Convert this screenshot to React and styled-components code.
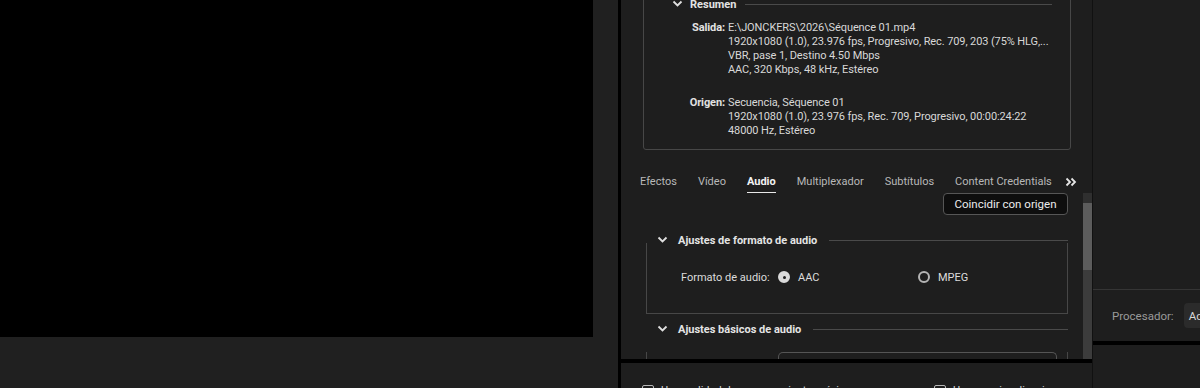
import React from 'react';
import styled, { createGlobalStyle } from 'styled-components';

const Global = createGlobalStyle`
    html, body {
        margin: 0;
        padding: 0;
        background: #1e1e1e;
        overflow: hidden;
    }
    body {
        font-family: Roboto, "Noto Sans", sans-serif;
        font-size: 11px;
        color: #d6d6d6;
    }
`;

const Screen = styled.div`
    display: flex;
    width: 1200px;
    height: 388px;
    overflow: hidden;
    background: #1e1e1e;
`;

const PreviewColumn = styled.div`
    width: 618px;
    flex-shrink: 0;
    background: #202020;
`;

const Video = styled.div`
    width: 593px;
    height: 337px;
    background: #000;
`;

const Divider = styled.div`
    width: ${props => props.size || 3}px;
    flex-shrink: 0;
    background: ${props => props.color || '#000'};
`;

const SettingsColumn = styled.div`
    width: 471px;
    flex-shrink: 0;
    display: flex;
    flex-direction: column;
    background: #1e1e1e;
`;

const Fixed = styled.div`
    height: 193px;
    flex-shrink: 0;
    overflow: hidden;
`;

const SummaryBox = styled.div`
    margin: -12px 21px 0 22px;
    border: 1px solid #474747;
    border-radius: 3px;
    padding: 8px 0 11px 0;
`;

const Heading = styled.div`
    display: flex;
    align-items: center;
    height: 14px;
    gap: ${props => props.gap || 7}px;
    padding-left: ${props => props.indent || 0}px;
    padding-right: ${props => props.endGap || 0}px;
    font-weight: 700;
    font-size: 11px;
    color: #e4e4e4;
    white-space: nowrap;
`;

const HeadLine = styled.div`
    flex: 1;
    height: 1px;
    background: #4a4a4a;
    margin-left: 2px;
`;

const Chevron = () => (
    <svg width="11" height="8" viewBox="0 0 11 8">
        <path d="M1.5 1.5 L5.5 5.5 L9.5 1.5" fill="none" stroke="#e0e0e0" strokeWidth="1.8" />
    </svg>
);

const InfoGrid = styled.div`
    display: grid;
    grid-template-columns: 81px 1fr;
    column-gap: 3px;
    margin-top: ${props => props.top}px;
    line-height: 14px;
    letter-spacing: -0.1px;
`;

const InfoLabel = styled.div`
    text-align: right;
    font-weight: 700;
    color: #e2e2e2;
`;

const InfoValue = styled.div`
    color: #d8d8d8;
    white-space: nowrap;
`;

const Tabs = styled.div`
    display: flex;
    align-items: flex-end;
    margin: 23px 12px 0 19px;
    height: 20px;
    border-bottom: 1px solid #3e3e3e;
    gap: 21px;
`;

const Tab = styled.div`
    position: relative;
    height: 20px;
    line-height: 17px;
    font-size: 11px;
    white-space: nowrap;
    color: ${props => props.active ? '#f2f2f2' : '#b8b8b8'};
    font-weight: ${props => props.active ? 700 : 400};
    &::after {
        content: '';
        display: ${props => props.active ? 'block' : 'none'};
        position: absolute;
        left: 0;
        right: 0;
        bottom: -1px;
        height: 2px;
        background: #e8e8e8;
    }
`;

const More = styled.div`
    height: 20px;
    margin-left: -8px;
    display: flex;
    align-items: flex-start;
    padding-top: 4px;
    box-sizing: border-box;
`;

const ScrollArea = styled.div`
    height: 166px;
    flex-shrink: 0;
    display: flex;
    overflow: hidden;
`;

const ScrollContent = styled.div`
    flex: 1;
    overflow: hidden;
`;

const Scrollbar = styled.div`
    width: 9px;
    display: flex;
    flex-direction: column;
    background: #3a3a3a;
`;

const ScrollPart = styled.div`
    height: ${props => props.h}px;
    background: ${props => props.color};
`;

const ButtonRow = styled.div`
    display: flex;
    justify-content: flex-end;
    padding-right: 15px;
`;

const Button = styled.div`
    width: 123px;
    height: 20px;
    box-sizing: content-box;
    border: 1px solid #565656;
    border-radius: 4px;
    background: #0e0e0e;
    color: #ececec;
    font-size: 11.5px;
    display: flex;
    align-items: center;
    justify-content: center;
`;

const Section = styled.div`
    margin: ${props => props.top}px 15px 0 25px;
`;

const SectionBody = styled.div`
    margin-top: -4px;
    border: 1px solid #474747;
    border-top: none;
    border-bottom: ${props => props.open ? 'none' : '1px solid #474747'};
    height: ${props => props.h}px;
    box-sizing: border-box;
`;

const FieldRow = styled.div`
    display: flex;
    align-items: center;
    height: 14px;
    padding: 27px 0 0 34px;
    color: #dcdcdc;
`;

const FieldLabel = styled.div`
    width: 97px;
`;

const RadioOption = styled.div`
    display: flex;
    align-items: center;
    gap: 8px;
    width: ${props => props.w || 'auto'};
`;

const Radio = styled.div`
    width: 12px;
    height: 12px;
    border-radius: 50%;
    box-sizing: border-box;
    border: 2px solid ${props => props.checked ? '#dadada' : '#b4b4b4'};
    background: ${props => props.checked ? '#dadada' : 'transparent'};
    display: flex;
    align-items: center;
    justify-content: center;
    &::after {
        content: '';
        width: 3px;
        height: 3px;
        border-radius: 50%;
        background: #1e1e1e;
        display: ${props => props.checked ? 'block' : 'none'};
    }
`;

const Field = styled.div`
    margin: 20px 10px 0 131px;
    height: 14px;
    border: 1px solid #555;
    border-bottom: none;
    border-radius: 5px 5px 0 0;
`;

const BottomPanel = styled.div`
    flex: 1;
    display: flex;
    padding: 21px 0 0 21px;
    border-top: 4px solid #000;
    overflow: hidden;
`;

const Check = styled.div`
    display: flex;
    align-items: flex-start;
    gap: 7px;
    width: ${props => props.w}px;
    color: #d8d8d8;
    white-space: nowrap;
`;

const CheckBox = styled.div`
    width: 10px;
    height: 10px;
    border: 1px solid #b8b8b8;
    border-radius: 2px;
    flex-shrink: 0;
    margin-top: 1px;
`;

const SideColumn = styled.div`
    flex: 1;
    display: flex;
    flex-direction: column;
    background: #1e1e1e;
`;

const SideTop = styled.div`
    height: 289px;
    border-bottom: 1px solid #353535;
`;

const ProcRow = styled.div`
    height: 51px;
    display: flex;
    align-items: center;
    gap: 10px;
    padding-left: 19px;
    border-bottom: 4px solid #000;
    color: #9a9a9a;
    font-size: 11.5px;
`;

const Select = styled.div`
    width: 60px;
    height: 25px;
    border-radius: 4px 0 0 4px;
    background: #2b2b2b;
    color: #d8d8d8;
    display: flex;
    align-items: center;
    padding-left: 5px;
    white-space: nowrap;
    overflow: hidden;
`;

const salida = [
    'E:\\JONCKERS\\2026\\Séquence 01.mp4',
    '1920x1080 (1.0), 23.976 fps, Progresivo, Rec. 709, 203 (75% HLG,...',
    'VBR, pase 1, Destino 4.50 Mbps',
    'AAC, 320 Kbps, 48 kHz, Estéreo',
];

const origen = [
    'Secuencia, Séquence 01',
    '1920x1080 (1.0), 23.976 fps, Rec. 709, Progresivo, 00:00:24:22',
    '48000 Hz, Estéreo',
];

const tabs = ['Efectos', 'Vídeo', 'Audio', 'Multiplexador', 'Subtítulos', 'Content Credentials'];

const InfoBlock = ({ label, lines, top }) => (
    <InfoGrid top={top}>
        {lines.map((line, i) => (
            <React.Fragment key={i}>
                <InfoLabel>{i === 0 ? label : ''}</InfoLabel>
                <InfoValue>{line}</InfoValue>
            </React.Fragment>
        ))}
    </InfoGrid>
);

export default function App() {
    return (
        <Screen>
            <Global />
            <PreviewColumn>
                <Video />
            </PreviewColumn>
            <Divider />
            <SettingsColumn>
                <Fixed>
                    <SummaryBox>
                        <Heading indent={28} endGap={18}>
                            <Chevron />
                            <span>Resumen</span>
                            <HeadLine />
                        </Heading>
                        <InfoBlock label="Salida:" lines={salida} top={10} />
                        <InfoBlock label="Origen:" lines={origen} top={19} />
                    </SummaryBox>
                    <Tabs>
                        {tabs.map(t => (
                            <Tab key={t} active={t === 'Audio'}>{t}</Tab>
                        ))}
                        <More>
                            <svg width="12" height="10" viewBox="0 0 12 10">
                                <path d="M1.5 1.5 L5 5 L1.5 8.5 M6.5 1.5 L10 5 L6.5 8.5" fill="none" stroke="#e6e6e6" strokeWidth="1.8" />
                            </svg>
                        </More>
                    </Tabs>
                </Fixed>
                <ScrollArea>
                    <ScrollContent>
                        <ButtonRow>
                            <Button>Coincidir con origen</Button>
                        </ButtonRow>
                        <Section top={18}>
                            <Heading indent={11} gap={10}>
                                <Chevron />
                                <span>Ajustes de formato de audio</span>
                                <HeadLine />
                            </Heading>
                            <SectionBody h={71}>
                                <FieldRow>
                                    <FieldLabel>Formato de audio:</FieldLabel>
                                    <RadioOption w="140px">
                                        <Radio checked />
                                        <span>AAC</span>
                                    </RadioOption>
                                    <RadioOption>
                                        <Radio />
                                        <span>MPEG</span>
                                    </RadioOption>
                                </FieldRow>
                            </SectionBody>
                        </Section>
                        <Section top={8}>
                            <Heading indent={11} gap={10}>
                                <Chevron />
                                <span>Ajustes básicos de audio</span>
                                <HeadLine />
                            </Heading>
                            <SectionBody h={40} open>
                                <Field />
                            </SectionBody>
                        </Section>
                    </ScrollContent>
                    <Scrollbar>
                        <ScrollPart h={10} color="#2f2f2f" />
                        <ScrollPart h={67} color="#5c5c5c" />
                        <ScrollPart h={89} color="#3c3c3c" />
                    </Scrollbar>
                </ScrollArea>
                <BottomPanel>
                    <Check w={292}>
                        <CheckBox />
                        <span>Usar calidad de procesamiento máxima</span>
                    </Check>
                    <Check w={150}>
                        <CheckBox />
                        <span>Usar previsualizaciones</span>
                    </Check>
                </BottomPanel>
            </SettingsColumn>
            <Divider size={1} color="#111" />
            <SideColumn>
                <SideTop />
                <ProcRow>
                    <span>Procesador:</span>
                    <Select>Aceleración</Select>
                </ProcRow>
            </SideColumn>
        </Screen>
    );
}
